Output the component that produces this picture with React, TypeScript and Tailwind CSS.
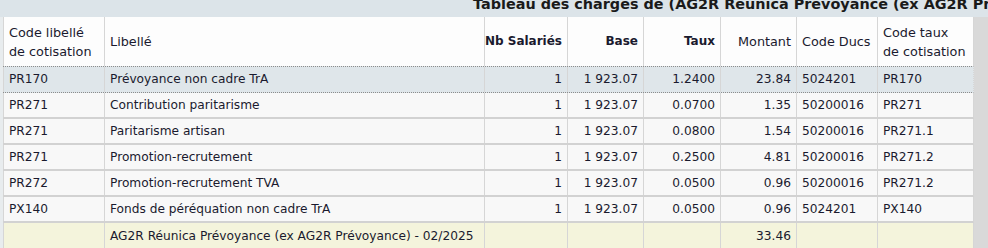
import React from "react";

const cols = "grid grid-cols-[101px_380px_83px_76px_77px_76px_81px_96px]";

type Row = {
  code: string;
  lib: string;
  nb: string;
  base: string;
  taux: string;
  montant: string;
  ducs: string;
  ct: string;
};

const rows: Row[] = [
  { code: "PR170", lib: "Prévoyance non cadre TrA", nb: "1", base: "1 923.07", taux: "1.2400", montant: "23.84", ducs: "5024201", ct: "PR170" },
  { code: "PR271", lib: "Contribution paritarisme", nb: "1", base: "1 923.07", taux: "0.0700", montant: "1.35", ducs: "50200016", ct: "PR271" },
  { code: "PR271", lib: "Paritarisme artisan", nb: "1", base: "1 923.07", taux: "0.0800", montant: "1.54", ducs: "50200016", ct: "PR271.1" },
  { code: "PR271", lib: "Promotion-recrutement", nb: "1", base: "1 923.07", taux: "0.2500", montant: "4.81", ducs: "50200016", ct: "PR271.2" },
  { code: "PR272", lib: "Promotion-recrutement TVA", nb: "1", base: "1 923.07", taux: "0.0500", montant: "0.96", ducs: "50200016", ct: "PR271.2" },
  { code: "PX140", lib: "Fonds de péréquation non cadre TrA", nb: "1", base: "1 923.07", taux: "0.0500", montant: "0.96", ducs: "5024201", ct: "PX140" },
];

const base = "border-l border-[#d6d6d6] px-[5px] flex items-center overflow-hidden";
const cell = `${base} whitespace-nowrap`;

function DataRow({ r, selected }: { r: Row; selected?: boolean }) {
  const rowCls = selected
    ? "bg-[#dfe6ea] border-y border-dotted border-[#8c8c8c] h-[27px]"
    : "bg-[#f8f8f8] border-b-2 border-[#d2d2d2] h-[26px]";
  return (
    <div className={`${cols} ${rowCls} border-r border-r-[#d6d6d6]`}>
      <div className={cell}>{r.code}</div>
      <div className={cell}>{r.lib}</div>
      <div className={`${cell} justify-end`}>{r.nb}</div>
      <div className={`${cell} justify-end`}>{r.base}</div>
      <div className={`${cell} justify-end`}>{r.taux}</div>
      <div className={`${cell} justify-end`}>{r.montant}</div>
      <div className={cell}>{r.ducs}</div>
      <div className={cell}>{r.ct}</div>
    </div>
  );
}

export default function App() {
  return (
    <div className="w-[988px] h-[248px] overflow-hidden bg-[#e6e9eb] font-['DejaVu_Sans',sans-serif] text-[#1a1a2e]">
      <div className="h-[17px] bg-[#dce4e9] overflow-hidden">
        <div className="pl-[473px] -mt-[5px] whitespace-nowrap font-bold text-[14.4px] leading-[18px] text-[#1a1a1a]">
          Tableau des charges de (AG2R Réunica Prévoyance (ex AG2R Prévoyance) - 02/2025)
        </div>
      </div>
      <div className="flex">
        <div className="w-[3px] shrink-0 bg-[#e8ecee]" />
        <div className="w-[971px] shrink-0 text-[12.2px]">
          <div className={`${cols} h-[49px] bg-[#fdfdfd] border-r border-[#d6d6d6] text-[12.8px] leading-[19px]`}>
            <div className={cell}>
              <span>
                Code libellé
                <br />
                de cotisation
              </span>
            </div>
            <div className={cell}>Libellé</div>
            <div className={`${cell} justify-end font-bold text-[12px]`}>Nb Salariés</div>
            <div className={`${cell} justify-end font-bold text-[12px]`}>Base</div>
            <div className={`${cell} justify-end font-bold text-[12px]`}>Taux</div>
            <div className={`${cell} justify-end`}>Montant</div>
            <div className={cell}>Code Ducs</div>
            <div className={cell}>
              <span>
                Code taux
                <br />
                de cotisation
              </span>
            </div>
          </div>
          <DataRow r={rows[0]} selected />
          {rows.slice(1).map((r, i) => (
            <DataRow key={i} r={r} />
          ))}
          <div className={`${cols} h-[26px] bg-[#f4f4dc] border-r border-[#d6d6d6]`}>
            <div className={cell}></div>
            <div className={cell}>AG2R Réunica Prévoyance (ex AG2R Prévoyance) - 02/2025</div>
            <div className={cell}></div>
            <div className={cell}></div>
            <div className={cell}></div>
            <div className={`${cell} justify-end`}>33.46</div>
            <div className={cell}></div>
            <div className={cell}></div>
          </div>
        </div>
        <div className="flex-1 bg-[#d9d9d9] h-[231px]" />
      </div>
    </div>
  );
}
